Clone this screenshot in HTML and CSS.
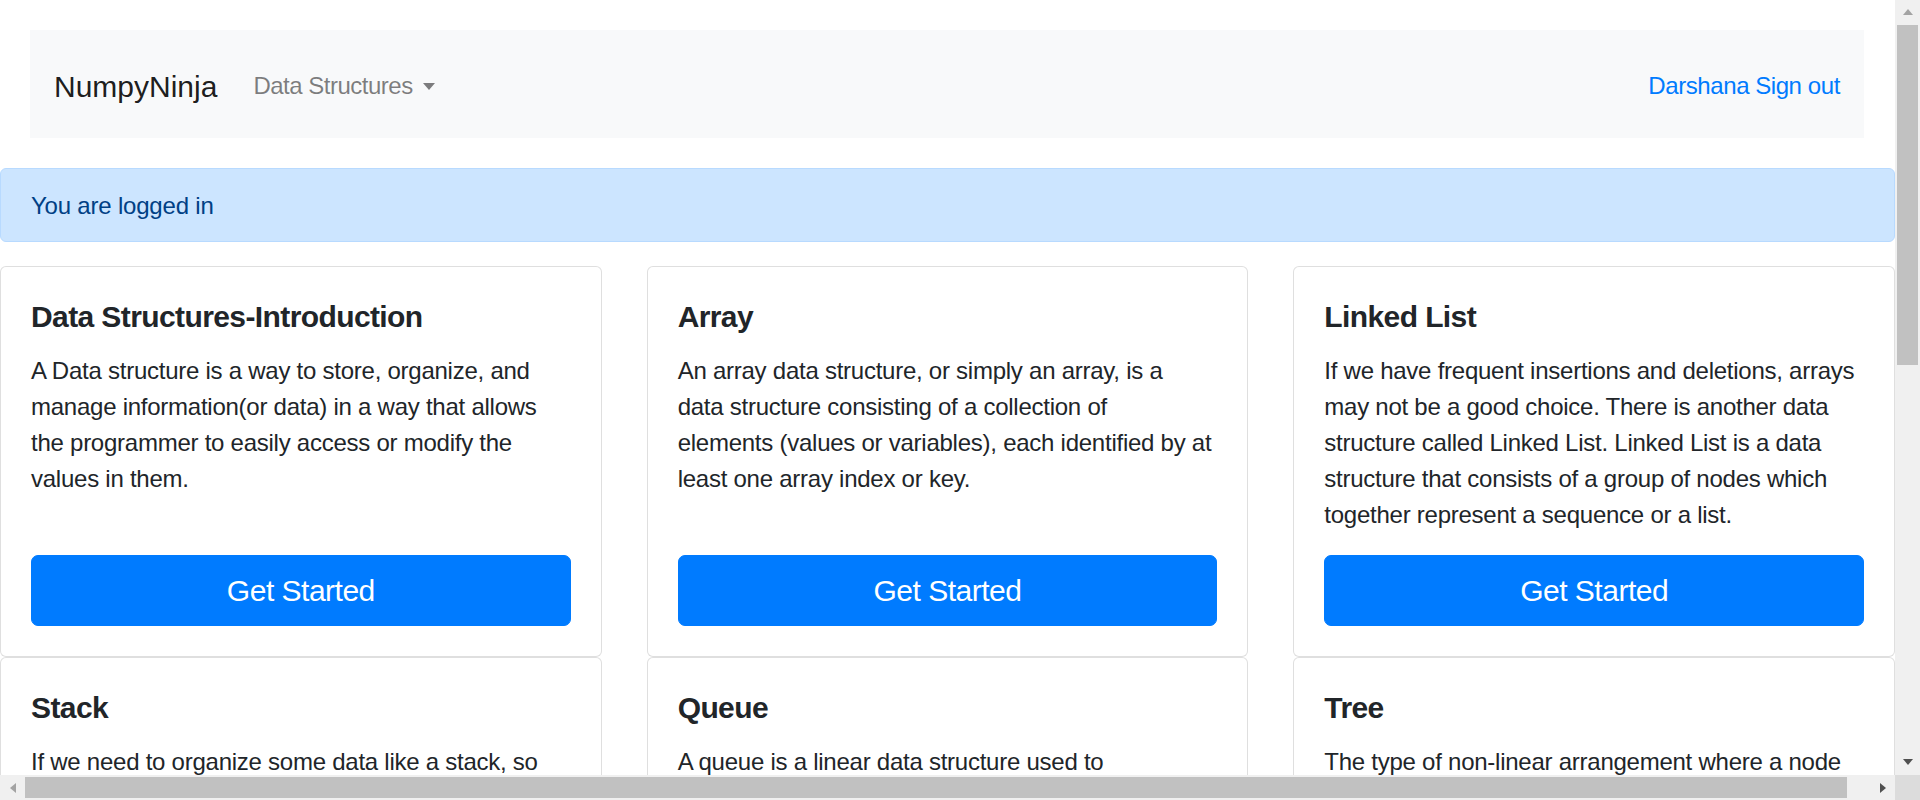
FILE: index.html
```html
<!DOCTYPE html>
<html lang="en">
<head>
<meta charset="utf-8">
<title>NumpyNinja</title>
<link rel="stylesheet" href="styles.css">
</head>
<body>
<div class="page">
  <nav class="navbar">
    <a class="brand" href="#">NumpyNinja</a>
    <div class="dropdown">
      <a class="nav-link" href="#">Data Structures</a><span class="caret"></span>
    </div>
    <div class="user-links">
      <a href="#">Darshana</a>
      <a href="#">Sign out</a>
    </div>
  </nav>

  <div class="alert">You are logged in</div>

  <div class="row">
    <div class="col">
      <div class="card">
        <h5 class="card-title">Data Structures-Introduction</h5>
        <p class="card-text">A Data structure is a way to store, organize, and manage information(or data) in a way that allows the programmer to easily access or modify the values in them.</p>
        <a class="btn" href="#">Get Started</a>
      </div>
    </div>
    <div class="col">
      <div class="card">
        <h5 class="card-title">Array</h5>
        <p class="card-text">An array data structure, or simply an array, is a<br>data structure consisting of a collection of<br>elements (values or variables), each identified by at least one array index or key.</p>
        <a class="btn" href="#">Get Started</a>
      </div>
    </div>
    <div class="col">
      <div class="card">
        <h5 class="card-title">Linked List</h5>
        <p class="card-text">If we have frequent insertions and deletions, arrays may not be a good choice. There is another data structure called Linked List. Linked List is a data structure that consists of a group of nodes which together represent a sequence or a list.</p>
        <a class="btn" href="#">Get Started</a>
      </div>
    </div>
    <div class="col">
      <div class="card">
        <h5 class="card-title">Stack</h5>
        <p class="card-text">If we need to organize some data like a stack, so that the last element added is the first one removed, we use a Stack data structure.</p>
        <a class="btn" href="#">Get Started</a>
      </div>
    </div>
    <div class="col">
      <div class="card">
        <h5 class="card-title">Queue</h5>
        <p class="card-text">A queue is a linear data structure used to sequentially store elements, following the First In First Out (FIFO) order.</p>
        <a class="btn" href="#">Get Started</a>
      </div>
    </div>
    <div class="col">
      <div class="card">
        <h5 class="card-title">Tree</h5>
        <p class="card-text">The type of non-linear arrangement where a node can have multiple children and data is stored in a hierarchical manner is called a Tree.</p>
        <a class="btn" href="#">Get Started</a>
      </div>
    </div>
    <div class="col">
      <div class="card">
        <h5 class="card-title">Graph</h5>
        <p class="card-text">A graph is a non-linear data structure consisting of nodes and the edges that connect any two nodes in the graph.</p>
        <a class="btn" href="#">Get Started</a>
      </div>
    </div>
  </div>
</div>

<div class="vscroll">
  <div class="arrow-box"><span class="tri tri-up"></span></div>
  <div class="vthumb"></div>
  <div class="spacer"></div>
  <div class="arrow-box"><span class="tri tri-down"></span></div>
</div>
<div class="hscroll">
  <div class="arrow-box"><span class="tri tri-left"></span></div>
  <div class="hthumb"></div>
  <div class="spacer"></div>
  <div class="arrow-box"><span class="tri tri-right"></span></div>
</div>
<div class="scroll-corner"></div>
</body>
</html>
```

FILE: styles.css
```css
html {
  overflow: hidden;
}

body {
  margin: 0;
  font-family: "Liberation Sans", Arial, sans-serif;
  font-size: 24px;
  line-height: 36px;
  letter-spacing: -0.2px;
  color: #212529;
  background: #ffffff;
}

a {
  text-decoration: none;
}

.page {
  width: 1895px;
  height: 775px;
  overflow: hidden;
}

/* Navbar */
.navbar {
  display: flex;
  align-items: center;
  margin: 30px 31px 30px 30px;
  padding: 26px 24px 22px;
  background: #f8f9fa;
}

.brand {
  font-size: 30px;
  line-height: 45px;
  padding: 7.5px 0;
  margin-right: 24px;
  letter-spacing: 0;
  color: rgba(0, 0, 0, 0.9);
}

.dropdown {
  display: flex;
  align-items: center;
}

.nav-link {
  padding: 12px 0 12px 12px;
  color: rgba(0, 0, 0, 0.5);
  letter-spacing: -0.5px;
}

.caret {
  display: inline-block;
  width: 0;
  height: 0;
  margin-left: 10px;
  margin-top: 1px;
  border-top: 7px solid rgba(0, 0, 0, 0.5);
  border-left: 6px solid transparent;
  border-right: 6px solid transparent;
}

.user-links {
  margin-left: auto;
  display: flex;
  gap: 6px;
  letter-spacing: -0.4px;
}

.user-links a {
  color: #007bff;
}

/* Alert */
.alert {
  padding: 19px 30px 17px;
  margin-bottom: 24px;
  background: #cce5ff;
  border: 1px solid #b8daff;
  border-radius: 6px;
  color: #004085;
}

/* Cards grid */
.row {
  display: flex;
  flex-wrap: wrap;
  margin: 0 -22.5px;
}

.col {
  flex: 0 0 33.3333%;
  max-width: 33.3333%;
  box-sizing: border-box;
  padding: 0 22.5px;
  display: flex;
}

.card {
  flex: 1;
  display: flex;
  flex-direction: column;
  padding: 30px;
  border: 1px solid rgba(0, 0, 0, 0.125);
  border-radius: 6px;
  background: #fff;
}

.card-title {
  margin: 0 0 16px;
  padding-top: 2px;
  font-size: 30px;
  line-height: 36px;
  font-weight: 700;
  letter-spacing: -0.6px;
}

.card-text {
  margin: 0 0 22px;
  padding-top: 2px;
  letter-spacing: -0.25px;
}

.btn {
  margin-top: auto;
  display: block;
  text-align: center;
  padding: 12px 24px;
  font-size: 30px;
  line-height: 45px;
  letter-spacing: -0.5px;
  color: #fff;
  background: #007bff;
  border: 1.5px solid #007bff;
  border-radius: 7px;
}

/* Fake browser scrollbars (overlay) */
.vscroll {
  position: fixed;
  top: 0;
  right: 0;
  width: 25px;
  height: 775px;
  background: #f0f0f0;
  display: flex;
  flex-direction: column;
  align-items: center;
}

.hscroll {
  position: fixed;
  left: 0;
  bottom: 0;
  width: 1895px;
  height: 25px;
  background: #f0f0f0;
  display: flex;
  align-items: center;
}

.scroll-corner {
  position: fixed;
  right: 0;
  bottom: 0;
  width: 25px;
  height: 25px;
  background: #dcdcdc;
}

.arrow-box {
  width: 25px;
  height: 25px;
  flex: 0 0 25px;
  display: flex;
  align-items: center;
  justify-content: center;
}

.spacer {
  flex: 1;
}

.vthumb {
  width: 21px;
  height: 340px;
  background: #c1c1c1;
}

.hthumb {
  width: 1822px;
  height: 21px;
  background: #c1c1c1;
}

.tri {
  width: 0;
  height: 0;
}

.tri-up {
  border-left: 5.5px solid transparent;
  border-right: 5.5px solid transparent;
  border-bottom: 6px solid #a3a3a3;
  margin-top: -2px;
}

.tri-down {
  border-left: 5.5px solid transparent;
  border-right: 5.5px solid transparent;
  border-top: 6px solid #505050;
  margin-top: -1px;
}

.tri-left {
  border-top: 5.5px solid transparent;
  border-bottom: 5.5px solid transparent;
  border-right: 6px solid #a3a3a3;
}

.tri-right {
  border-top: 5.5px solid transparent;
  border-bottom: 5.5px solid transparent;
  border-left: 6px solid #505050;
}
```
